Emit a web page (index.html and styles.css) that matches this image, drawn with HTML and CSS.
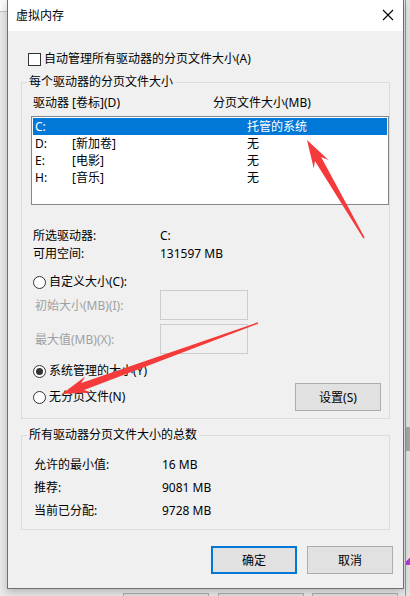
FILE: index.html
```html
<!DOCTYPE html>
<html lang="zh-CN">
<head>
    <meta charset="UTF-8">
    <meta name="viewport" content="width=device-width, initial-scale=1.0">
    <title>虚拟内存</title>
    <link rel="stylesheet" href="styles.css">
</head>
<body>

<div class="desktop">
    <!-- window behind the dialog -->
    <div class="back-top"></div>
    <div class="back-side">
        <div class="side-dark"></div>
        <div class="side-mark"></div>
    </div>
    <div class="back-btn" style="left: 123px"></div>
    <div class="back-btn" style="left: 218px"></div>
    <div class="back-btn" style="left: 312px"></div>

    <div class="dialog">
        <div class="titlebar">
            <span class="title">虚拟内存</span>
            <svg class="close" width="12" height="12" viewBox="0 0 12 12">
                <path d="M1 1 L11 11 M11 1 L1 11" stroke="#000" stroke-width="1.1" fill="none"/>
            </svg>
        </div>

        <div class="dialog-body">
            <div class="check-row">
                <span class="checkbox"></span>
                <span>自动管理所有驱动器的分页文件大小(A)</span>
            </div>

            <fieldset class="group">
                <legend>每个驱动器的分页文件大小</legend>

                <div class="list-head">
                    <span class="head-drive">驱动器 [卷标](D)</span>
                    <span>分页文件大小(MB)</span>
                </div>

                <div class="listbox">
                    <div class="list-row selected">
                        <span class="col-letter">C:</span><span class="col-label"></span><span>托管的系统</span>
                    </div>
                    <div class="list-row">
                        <span class="col-letter">D:</span><span class="col-label">[新加卷]</span><span>无</span>
                    </div>
                    <div class="list-row">
                        <span class="col-letter">E:</span><span class="col-label">[电影]</span><span>无</span>
                    </div>
                    <div class="list-row">
                        <span class="col-letter">H:</span><span class="col-label">[音乐]</span><span>无</span>
                    </div>
                </div>

                <div class="info">
                    <div class="info-row"><span class="info-key">所选驱动器:</span><span>C:</span></div>
                    <div class="info-row"><span class="info-key">可用空间:</span><span>131597 MB</span></div>
                </div>

                <div class="radio-row radio-custom">
                    <span class="radio"></span><span>自定义大小(C):</span>
                </div>
                <div class="field-row">
                    <span class="field-label">初始大小(MB)(I):</span>
                    <span class="field-box"></span>
                </div>
                <div class="field-row field-second">
                    <span class="field-label">最大值(MB)(X):</span>
                    <span class="field-box"></span>
                </div>

                <div class="radio-row radio-system">
                    <span class="radio checked"></span><span>系统管理的大小(Y)</span>
                </div>
                <div class="last-row">
                    <div class="radio-row">
                        <span class="radio"></span><span>无分页文件(N)</span>
                    </div>
                    <button class="btn btn-set">设置(S)</button>
                </div>
            </fieldset>

            <fieldset class="group group-total">
                <legend>所有驱动器分页文件大小的总数</legend>
                <div class="totals">
                    <div class="total-row"><span class="total-key">允许的最小值:</span><span>16 MB</span></div>
                    <div class="total-row"><span class="total-key">推荐:</span><span>9081 MB</span></div>
                    <div class="total-row"><span class="total-key">当前已分配:</span><span>9728 MB</span></div>
                </div>
            </fieldset>

            <div class="dialog-buttons">
                <button class="btn btn-default">确定</button>
                <button class="btn">取消</button>
            </div>
        </div>
    </div>

    <!-- red markup arrows -->
    <svg class="marks" width="410" height="596" viewBox="0 0 410 596">
        <polygon fill="#f43a3a" points="307,140 328.5,160.0 321.1,157.0 364.6,237.6 363.4,238.4 314.9,161.0 313.8,168.6"/>
        <polygon fill="#f43a3a" points="62,394 85.2,376.6 81.3,383.0 257.8,322.3 258.2,323.7 84.1,390.0 91.4,392.4"/>
    </svg>
</div>

</body>
</html>
```

FILE: styles.css
```css
* {
    box-sizing: border-box;
}
body {
    margin: 0;
    font-family: "Noto Sans", "Noto Sans CJK SC", sans-serif;
    font-size: 12px;
    color: #000;
    background: #e9e9e9;
}
.desktop {
    position: relative;
    width: 410px;
    height: 596px;
    overflow: hidden;
    background: #e9e9e9;
}

/* things that belong to the window underneath */
.back-top {
    position: absolute;
    left: 0;
    top: 0;
    width: 8px;
    height: 12px;
    background: #fafafa;
    border-bottom: 1px solid #c4c4c4;
}
.back-side {
    position: absolute;
    left: 405px;
    top: 0;
    width: 5px;
    height: 596px;
    background: #e4e4e4;
    border-left: 1px solid #9a9a9a;
}
.side-dark {
    position: absolute;
    left: 0;
    top: 427px;
    width: 5px;
    height: 24px;
    background: #a7a7a7;
}
.side-mark {
    position: absolute;
    left: 0;
    top: 553px;
    width: 5px;
    height: 12px;
    background: linear-gradient(135deg, transparent 50%, #b23bd8 50%);
}
.back-btn {
    position: absolute;
    top: 593px;
    width: 86px;
    height: 10px;
    background: #e1e1e1;
    border: 1px solid #adadad;
}

/* dialog */
.dialog {
    position: relative;
    margin-left: 7px;
    width: 397px;
    height: 589px;
    background: #f0f0f0;
    border: 1px solid #6f6f6f;
    border-top: none;
    box-shadow: 0 3px 8px rgba(0, 0, 0, 0.22);
}
.titlebar {
    height: 31px;
    background: #fff;
    display: flex;
    align-items: center;
    justify-content: space-between;
    padding: 0 9px 0 8px;
}
.title {
    line-height: 16px;
    margin-top: 1px;
}
.close {
    margin-top: -1px;
}
.dialog-body {
    padding: 21px 13px 0 13px;
}

.check-row {
    display: flex;
    align-items: center;
    height: 14px;
    margin-left: 7px;
    gap: 3px;
    line-height: 14px;
}
.checkbox {
    width: 13px;
    height: 13px;
    background: #fff;
    border: 1px solid #333;
}

/* group boxes */
.group {
    margin: 8px 0 0 0;
    padding: 0 0 7px 0;
    min-width: 0;
    border: 1px solid #dcdcdc;
}
.group legend {
    margin-left: 5px;
    padding: 0 2px;
    line-height: 16px;
}

.list-head {
    display: flex;
    margin: 6px 0 0 11px;
    line-height: 14px;
}
.head-drive {
    width: 180px;
}
.listbox {
    margin: 6px 0 0 9px;
    width: 358px;
    height: 89px;
    background: #fff;
    border: 1px solid #828790;
    padding: 1px;
}
.list-row {
    display: flex;
    height: 17px;
    line-height: 17px;
    padding-left: 2px;
}
.list-row.selected {
    background: #0078d7;
    color: #fff;
}
.col-letter {
    width: 37px;
}
.col-label {
    width: 175px;
}

.info {
    margin: 22px 0 0 11px;
}
.info-row {
    display: flex;
    height: 18px;
    line-height: 18px;
}
.info-key {
    width: 127px;
}

.radio-row {
    display: flex;
    align-items: center;
    gap: 3px;
    height: 16px;
    line-height: 16px;
    margin-left: 11px;
}
.radio {
    position: relative;
    width: 13px;
    height: 13px;
    border-radius: 50%;
    border: 1px solid #333;
    background: #fff;
}
.radio.checked::after {
    content: "";
    position: absolute;
    left: 2px;
    top: 2px;
    width: 7px;
    height: 7px;
    border-radius: 50%;
    background: #333;
}
.radio-custom {
    margin-top: 11px;
}
.radio-system {
    margin-top: 9px;
}

.field-row {
    display: flex;
    align-items: center;
    padding-left: 13px;
    color: #a0a0a0;
}
.field-second {
    margin-top: 4px;
}
.field-label {
    width: 125px;
}
.field-box {
    width: 88px;
    height: 30px;
    border: 1px solid #cccccc;
    background: #f0f0f0;
}

.last-row {
    display: flex;
    align-items: center;
    justify-content: space-between;
    margin: 4px 8px 0 0;
}
.last-row .radio-row {
    margin-left: 11px;
}

.btn {
    width: 86px;
    height: 28px;
    font-family: inherit;
    font-size: 12px;
    color: #000;
    background: #e1e1e1;
    border: 1px solid #adadad;
    padding: 0;
}
.btn-default {
    border: 2px solid #0078d7;
}

.totals {
    padding: 10px 0 0 12px;
}
.total-row {
    display: flex;
    height: 23px;
    line-height: 23px;
}
.total-key {
    width: 128px;
}

.dialog-buttons {
    display: flex;
    justify-content: flex-end;
    gap: 10px;
    margin: 16px -3px 0 0;
}

.marks {
    position: absolute;
    left: 0;
    top: 0;
    pointer-events: none;
}
```
